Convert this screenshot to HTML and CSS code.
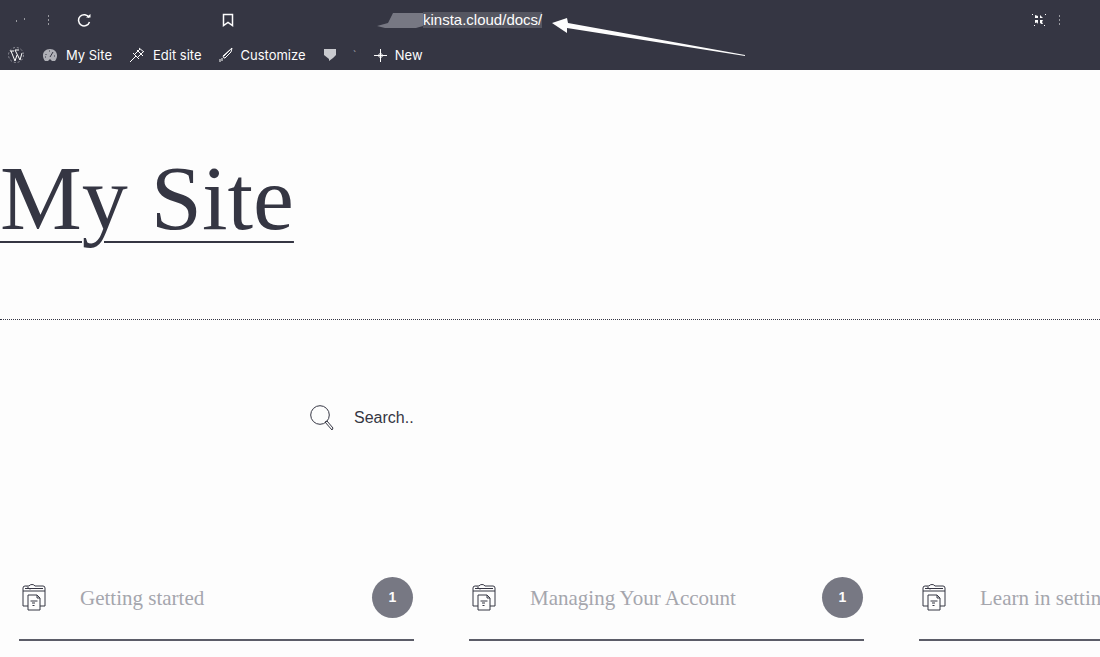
FILE: index.html
```html
<!DOCTYPE html>
<html lang="en">
<head>
<meta charset="utf-8">
<title>My Site</title>
<link rel="stylesheet" href="styles.css">
</head>
<body>
<svg class="defs" aria-hidden="true">
  <symbol id="folder" viewBox="0 0 24 28">
    <path d="M6 22H1V4q0-2 2-2h4q1-1.500 3-1.500t3 1.500h8q2 0 2 2v18h-5M1 7h22M3 4.500h18M5 2.500l3 3"/>
    <path d="M6 11h9l3 3v12H6zM15 11v3h3M8.500 17h7M10 19h3M10.500 21.500h2"/>
  </symbol>
</svg>
<header class="top">
  <div class="browser">
    <button class="ghost nav" aria-label="Back"><svg width="12" height="8" viewBox="0 0 12 8"><path d="M2 5h1M10 3h1"/></svg></button>
    <button class="ghost menu" aria-label="Options"><svg width="4" height="12" viewBox="0 0 4 12"><path d="M2 2h1M2 6h1M2 10h1"/></svg></button>
    <button class="ghost reload" aria-label="Reload"><svg width="14" height="14" viewBox="0 0 14 14"><path class="bold" d="M12 4.500A5.600 5.600 0 1 0 12.500 9"/><path class="solid" d="M9 4.500h4.500V1z"/></svg></button>
    <button class="ghost bookmark" aria-label="Bookmark"><svg width="12" height="14" viewBox="0 0 12 14"><path class="bold" d="M1.500 1.500h9V12.500L6 9.500l-4.500 3z"/></svg></button>
    <div class="address">
      <svg width="46" height="18" viewBox="0 0 46 18" aria-hidden="true"><path class="redact" d="M0 15l11-3 5-10h30v13l-7 2H8z"/></svg>
      <span class="url">kinsta.cloud/docs/</span>
      <svg class="arrow" width="198" height="44" viewBox="0 0 198 44" aria-hidden="true"><path class="solid" d="M2 9L17 4l1 5 177 32v1L17 14l0 5z"/></svg>
    </div>
    <button class="ghost shrink" aria-label="Exit full screen"><svg width="14" height="14" viewBox="0 0 14 14"><path d="M0 1.500h1M13 1.500h1M2 12.500h1M12 12.500h1"/><path class="solid" d="M3 2l3 1v2H3zM8 2l3 3H8zM3 7h3v4L5 9.500 3 10zM8 7h3L10 9l1 2H9.500L8 10z"/></svg></button>
    <button class="ghost more" aria-label="More"><svg width="4" height="12" viewBox="0 0 4 12"><path d="M1 2h1M1 6h1M1 10h1"/></svg></button>
  </div>
  <nav class="admin">
    <a href="#" aria-label="WordPress"><svg width="18" height="18" viewBox="0 0 18 18"><circle class="dim" cx="9" cy="9" r="7.500"/><path d="M4 5l4 10 2-6M8 4l5 10 2-7M3 5h4M8 4h4"/></svg></a>
    <a href="#"><svg width="16" height="14" viewBox="0 0 16 14"><path class="dimfill" d="M3 13C-1 8 1 1 8 1s9 7 5 12h-3L8 11l-2 2z"/><path class="cut" d="M8 9l3-5M4 6v1M7 3h1M3 9h1M12 8h1"/></svg><span>My Site</span></a>
    <a href="#"><svg width="16" height="16" viewBox="0 0 16 16"><path d="M1 15l6-6M4 6l6 6M6 7l5-5M9 10l5-5M8 3l6 6M10 1l5 4"/></svg><span>Edit site</span></a>
    <a href="#"><svg width="14" height="16" viewBox="0 0 14 16"><path d="M5 11l-1-2 9-8-1 4-6 6zM5 9l6-6M1 12v3M3 11v3"/></svg><span>Customize</span></a>
    <a class="comments" href="#" aria-label="Comments"><svg width="14" height="14" viewBox="0 0 14 14"><path class="comment" d="M1 1h12v6l-3 3-4 3V11L1 7z"/></svg><span class="tick">`</span></a>
    <a href="#"><svg width="13" height="13" viewBox="0 0 13 13"><path d="M6.500 0v13M0 6.500h13M4 6.500l2.500-2.500L9 6.500 6.500 9z"/></svg><span>New</span></a>
  </nav>
</header>
<main>
  <div class="brand"><h1><a href="#">My Site</a></h1></div>
  <form class="search">
    <label for="q" aria-label="Search"><svg width="26" height="26" viewBox="0 0 26 26"><circle cx="12" cy="10" r="9.300"/><path d="M17 17l2-1 6 7-1 2z"/></svg></label>
    <input id="q" type="text" placeholder="Search..">
  </form>
  <section class="cards">
    <article class="card"><svg width="24" height="28"><use href="#folder"/></svg><h2>Getting started</h2><span class="count">1</span></article>
    <article class="card"><svg width="24" height="28"><use href="#folder"/></svg><h2>Managing Your Account</h2><span class="count">1</span></article>
    <article class="card"><svg width="24" height="28"><use href="#folder"/></svg><h2>Learn in settings</h2><span class="count">1</span></article>
  </section>
</main>
</body>
</html>
```
FILE: styles.css
```css
* { box-sizing: border-box; }
body {
  margin: 0;
  background: #fdfdfd;
  color: #353643;
  font-family: "Liberation Sans", Arial, sans-serif;
}
svg { display: block; flex: none; fill: none; stroke: currentColor; }
.defs { position: absolute; width: 0; height: 0; }
.top { background: #353643; color: #fdfdfd; }
.browser { display: flex; align-items: center; height: 40px; padding: 0 38px 0 14px; }
.ghost { display: flex; padding: 0; border: 0; background: none; color: inherit; }
.menu { margin-left: 20px; }
.reload { margin-left: 27px; }
.bookmark { margin-left: 131px; }
.address { display: flex; align-items: center; margin-left: 143px; margin-right: auto; font-size: 15px; }
.arrow { position: relative; top: 16px; left: 8px; margin: -13px 0; }
.url { background: #555661; line-height: 16px; }
.more { margin-left: 12px; }
.bold { stroke-width: 1.5; }
.solid { fill: currentColor; stroke: none; }
.redact { fill: #777883; stroke: none; }
.dim { stroke: #92939c; stroke-dasharray: 2 2; }
.dimfill { fill: #aeafb6; stroke: none; }
.cut { stroke: #353643; }
.comment { fill: #c9cacf; stroke: none; }
.admin {
  display: flex;
  align-items: center;
  gap: 17px;
  height: 30px;
  padding-left: 7px;
  font-family: Inter, "Liberation Sans", sans-serif;
  font-size: 13px;
}
.admin a { display: flex; align-items: center; gap: 8px; color: inherit; text-decoration: none; }
.admin .comments { gap: 16px; }
.tick { color: #92939c; }
.brand { padding: 72px 0 64px; border-bottom: 1px dotted #353643; }
h1 { margin: 0; font: 400 92px/113px "Liberation Serif", "Times New Roman", serif; }
h1 a { color: inherit; text-decoration-thickness: 2px; text-underline-offset: 12px; }
.search { display: flex; align-items: center; gap: 20px; padding: 82px 20px 0 308px; }
.search input {
  flex: 1;
  height: 32px;
  padding: 0;
  border: 0;
  outline: 0;
  background: none;
  color: inherit;
  font: 16px "Liberation Sans", Arial, sans-serif;
}
.search input::placeholder { color: #353643; opacity: 1; }
.cards {
  display: grid;
  grid-template-columns: repeat(3, 395px);
  gap: 55px;
  padding: 143px 0 16px 19px;
  overflow: hidden;
}
.card { display: flex; align-items: center; height: 64px; padding: 0 1px 21px 3px; border-bottom: 2px solid #5c5d68; }
.card h2 { flex: 1; margin: 0 0 0 34px; color: #a5a6ad; font: 400 21px/28px "Liberation Serif", "Times New Roman", serif; }
.count {
  width: 41px;
  border-radius: 50%;
  background: #777883;
  color: #fdfdfd;
  font-size: 14px;
  font-weight: 700;
  line-height: 41px;
  text-align: center;
}
```
